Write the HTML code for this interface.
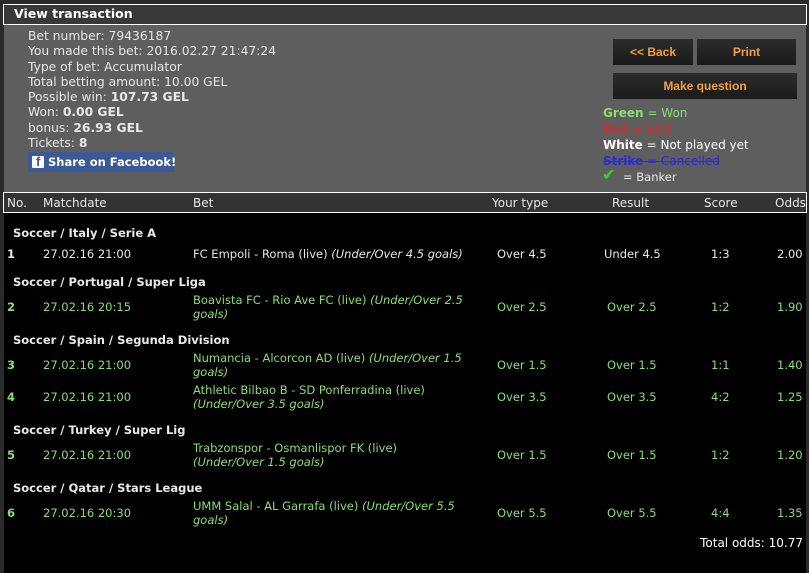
<!DOCTYPE html>
<html><head><meta charset="utf-8"><style>
*{margin:0;padding:0;box-sizing:border-box}
body{width:809px;height:573px;background:#2a2a2a;font-family:"DejaVu Sans","Liberation Sans",sans-serif;font-size:11.5px;color:#e8e8e8;position:relative;overflow:hidden}
.a{position:absolute;white-space:nowrap;line-height:14px}
.g{color:#86e06e}
b{font-weight:bold}
i{font-style:italic}
.btn{position:absolute;background:linear-gradient(#2c2c2c,#1a1a1a);color:#f0a040;font-weight:bold;font-family:"Liberation Sans",sans-serif;font-size:12px;text-align:center;line-height:26px}
.h{font-weight:bold}
.n{font-weight:bold}
</style></head><body>
<div style="position:absolute;left:3px;top:4px;width:804px;height:21px;background:#383838;border:1px solid #fff"></div>
<div class="a" style="left:14px;top:7px;font-weight:bold;font-size:12.5px;color:#fff">View transaction</div>
<div style="position:absolute;left:4px;top:25px;width:802px;height:167px;background:#5e5e5e"></div>
<div class="a" style="left:28px;top:29px;line-height:15.3px;font-size:12.3px">Bet number: 79436187<br>You made this bet: 2016.02.27 21:47:24<br>Type of bet: Accumulator<br>Total betting amount: 10.00 GEL<br>Possible win: <b>107.73 GEL</b><br>Won: <b>0.00 GEL</b><br>bonus: <b>26.93 GEL</b><br>Tickets: <b>8</b></div>
<div style="position:absolute;left:28px;top:152px;width:146px;height:20px;background:#3b5998"></div>
<div style="position:absolute;left:32px;top:156px;width:12px;height:12px;background:#fff;border-radius:1px;overflow:hidden"><span style="position:absolute;left:4px;top:-1px;color:#3b5998;font-weight:bold;font-size:13px;line-height:14px;font-family:'Liberation Sans',sans-serif">f</span></div>
<div class="a" style="left:48px;top:155px;color:#fff;font-weight:bold;font-size:11.5px">Share on Facebook!</div>
<div class="btn" style="left:613px;top:39px;width:80px">&lt;&lt; Back</div>
<div class="btn" style="left:697px;top:39px;width:99px">Print</div>
<div class="btn" style="left:613px;top:73px;width:184px">Make question</div>
<div class="a" style="left:603px;top:105px;line-height:16px;font-size:12px"><span class="g"><b>Green</b> = Won</span><br><span style="color:#c83030"><b>Red</b> = Lost</span><br><span style="color:#fff"><b>White</b> = Not played yet</span><br><span style="color:#2a2ae0;text-decoration:line-through"><b>Strike</b> = Cancelled</span></div>
<div class="a" style="left:602px;top:168px;color:#2ed62e;font-size:16px;font-weight:bold">✔</div>
<div class="a" style="left:623px;top:170px">= Banker</div>
<div style="position:absolute;left:3px;top:192px;width:804px;height:21px;background:#333;border:1px solid #fff"></div>
<div style="position:absolute;left:4px;top:213px;width:802px;height:360px;background:#000"></div>
<div class="a" style="left:7px;top:196px;font-size:12px">No.</div>
<div class="a" style="left:43px;top:196px;font-size:12px">Matchdate</div>
<div class="a" style="left:193px;top:196px;font-size:12px">Bet</div>
<div class="a" style="left:492px;top:196px;font-size:12px">Your type</div>
<div class="a" style="left:612px;top:196px;font-size:12px">Result</div>
<div class="a" style="left:704px;top:196px;font-size:12px">Score</div>
<div class="a" style="left:775px;top:196px;font-size:12px">Odds</div>

<div class="a h" style="left:13px;top:226px">Soccer / Italy / Serie A</div>
<div class="a n" style="left:7px;top:247px">1</div><div class="a" style="left:43px;top:247px">27.02.16 21:00</div>
<div class="a" style="left:193px;top:247px">FC Empoli - Roma (live) <i>(Under/Over 4.5 goals)</i></div>
<div class="a" style="left:497px;top:247px">Over 4.5</div><div class="a" style="left:604px;top:247px">Under 4.5</div><div class="a" style="left:711px;top:247px">1:3</div><div class="a" style="left:777px;top:247px">2.00</div>

<div class="a h" style="left:13px;top:275px">Soccer / Portugal / Super Liga</div>
<div class="g">
<div class="a n" style="left:7px;top:300px">2</div><div class="a" style="left:43px;top:300px">27.02.16 20:15</div>
<div class="a" style="left:193px;top:293px">Boavista FC - Rio Ave FC (live) <i>(Under/Over 2.5<br>goals)</i></div>
<div class="a" style="left:497px;top:300px">Over 2.5</div><div class="a" style="left:607px;top:300px">Over 2.5</div><div class="a" style="left:711px;top:300px">1:2</div><div class="a" style="left:777px;top:300px">1.90</div>
</div>

<div class="a h" style="left:13px;top:333px">Soccer / Spain / Segunda Division</div>
<div class="g">
<div class="a n" style="left:7px;top:358px">3</div><div class="a" style="left:43px;top:358px">27.02.16 21:00</div>
<div class="a" style="left:193px;top:351px">Numancia - Alcorcon AD (live) <i>(Under/Over 1.5<br>goals)</i></div>
<div class="a" style="left:497px;top:358px">Over 1.5</div><div class="a" style="left:607px;top:358px">Over 1.5</div><div class="a" style="left:711px;top:358px">1:1</div><div class="a" style="left:777px;top:358px">1.40</div>
<div class="a n" style="left:7px;top:390px">4</div><div class="a" style="left:43px;top:390px">27.02.16 21:00</div>
<div class="a" style="left:193px;top:383px">Athletic Bilbao B - SD Ponferradina (live)<br><i>(Under/Over 3.5 goals)</i></div>
<div class="a" style="left:497px;top:390px">Over 3.5</div><div class="a" style="left:607px;top:390px">Over 3.5</div><div class="a" style="left:711px;top:390px">4:2</div><div class="a" style="left:777px;top:390px">1.25</div>
</div>

<div class="a h" style="left:13px;top:423px">Soccer / Turkey / Super Lig</div>
<div class="g">
<div class="a n" style="left:7px;top:448px">5</div><div class="a" style="left:43px;top:448px">27.02.16 21:00</div>
<div class="a" style="left:193px;top:441px">Trabzonspor - Osmanlispor FK (live)<br><i>(Under/Over 1.5 goals)</i></div>
<div class="a" style="left:497px;top:448px">Over 1.5</div><div class="a" style="left:607px;top:448px">Over 1.5</div><div class="a" style="left:711px;top:448px">1:2</div><div class="a" style="left:777px;top:448px">1.20</div>
</div>

<div class="a h" style="left:13px;top:481px">Soccer / Qatar / Stars League</div>
<div class="g">
<div class="a n" style="left:7px;top:506px">6</div><div class="a" style="left:43px;top:506px">27.02.16 20:30</div>
<div class="a" style="left:193px;top:499px">UMM Salal - AL Garrafa (live) <i>(Under/Over 5.5<br>goals)</i></div>
<div class="a" style="left:497px;top:506px">Over 5.5</div><div class="a" style="left:607px;top:506px">Over 5.5</div><div class="a" style="left:711px;top:506px">4:4</div><div class="a" style="left:777px;top:506px">1.35</div>
</div>
<div class="a" style="right:6px;top:536px;color:#fff;font-size:12px">Total odds: 10.77</div>
</body></html>
